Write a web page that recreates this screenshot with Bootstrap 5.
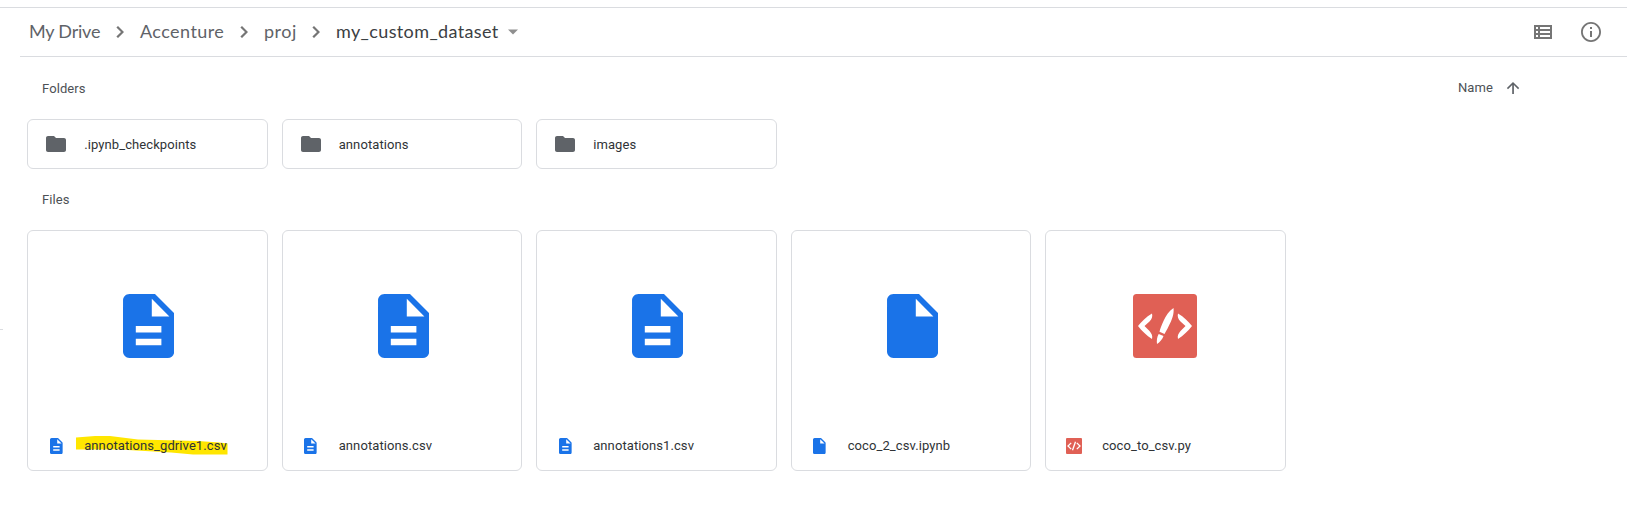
<!DOCTYPE html>
<html lang="en">
<head>
<meta charset="utf-8">
<meta name="viewport" content="width=device-width, initial-scale=1">
<title>my_custom_dataset</title>
<link href="https://cdn.jsdelivr.net/npm/bootstrap@5.3.0/dist/css/bootstrap.min.css" rel="stylesheet">
<style>
body{font-family:Roboto,sans-serif;font-size:13px;font-weight:400;color:#3c4043;background:#fff;line-height:20px;letter-spacing:.09px;overflow:hidden}
svg{display:block;flex:none;fill:currentColor}
.shell{height:522px;padding-top:7px}
.topline{border-top:1px solid #dadce0}
.pathbar{height:49px;margin-left:20px;padding-left:9px;border-bottom:1px solid #dadce0;font:400 18px/24px Lato,sans-serif;color:#5f6368}
.crumb{white-space:nowrap;padding-bottom:2px}
.crumb-drive{width:79px;letter-spacing:-.2px}
.crumb-acc{width:92px;letter-spacing:.43px}
.crumb-proj{width:40px;letter-spacing:.5px}
.crumb-here{width:163px;letter-spacing:.38px;color:#3c4043}
.sep{width:24px;margin-right:8px;color:#757575}
.tools{margin-left:auto;color:#757575;gap:24px;padding-right:24px}
.caret{color:#8f8f8f}
.subbar{height:62px}
.filesbar{height:61px}
.heading{color:#4d5156;padding-left:42px}
.subbar .heading{padding-top:2px}
.sorter{gap:8px;margin-right:102px;color:#4d5156}
.sorter svg{color:#5f6368;margin-bottom:1px}
.tiles{display:grid;grid-template-columns:repeat(5,240.5px);gap:14px;margin-left:27.2px}
.tile{--bs-card-border-color:#dadce0;--bs-card-border-radius:6px;color:#2f3336}
.folder{height:50px;padding-left:18px}
.folder svg{color:#5f6368;margin-right:18px}
.folder span{padding-top:1px}
.filecard{height:241px}
.preview{height:190px}
.preview.doc{padding-left:2.500px}
.label-row{height:49px}
.mini{width:56px}
.doc{color:#1a73e8}
.code{color:#e06055}
.fname{position:relative;white-space:nowrap}
.fname span{position:relative}
.marker{position:absolute;left:-9px;top:-1px;color:#ffe600}
.stub{position:absolute;left:0;top:329px;width:3px;height:1px;background:#dadce0}
</style>
</head>
<body>
<svg width="0" height="0" class="position-absolute" aria-hidden="true">
<symbol id="chev" viewBox="0 0 24 24"><path d="M10 6 8.4 7.6l4.6 4.4-4.6 4.4L10 18l6-6z"/></symbol>
<symbol id="folder" viewBox="2 4 20 16"><path d="M10 4H4c-1.1 0-1.99.9-1.99 2L2 18c0 1.1.9 2 2 2h16c1.1 0 2-.9 2-2V8c0-1.1-.9-2-2-2h-8l-2-2z"/></symbol>
<symbol id="text" viewBox="4 2 16 20"><path d="M14 2H6c-1.1 0-1.99.9-1.99 2L4 20c0 1.1.89 2 1.99 2H18c1.1 0 2-.9 2-2V8l-6-6zm2 16H8v-2h8v2zm0-4H8v-2h8v2zm-3-5V3.5L18.500 9H13z"/></symbol>
<symbol id="plain" viewBox="4 2 16 20"><path d="M14 2H6c-1.1 0-1.99.9-1.99 2L4 20c0 1.1.89 2 1.99 2H18c1.1 0 2-.9 2-2V8l-6-6zm-1 7V3.5L18.500 9H13z"/></symbol>
<symbol id="brush" viewBox="0 0 64 64"><rect width="64" height="64" rx="3.500"/><g fill="#fff"><path d="M19 19.500C13 23 8.500 27.500 5 32c4 5 8.500 9.500 14 13 .8-3-.3-5.500-2.500-8L11.500 32l5-4.500c2.300-2.300 3.300-5 2.500-8z"/><path d="M45 19.500C51 23 55.500 27.500 59 32c-4 5-8.500 9.500-14 13-.8-3 .3-5.500 2.500-8l5-5-5-4.500c-2.300-2.300-3.300-5-2.500-8z"/><path d="M40.500 14c.8 6-1.500 12-5 18.500-1.500 3-2.700 5.300-4 7.500l-5-2.200c.8-3.300 2.100-6.800 4-10.800 2.600-5.500 5.500-10 10-13zM25.700 40l4.800 2c-1.200 3.500-3.600 6-6.500 8-.5-3.500 0-7 1.700-10z"/></g></symbol>
<symbol id="tag" viewBox="0 0 16 16"><rect width="16" height="16" rx="1"/><path d="M5.200 4.900 2 8l3.200 3.100M10.800 4.900 14 8l-3.200 3.100M9.500 3.800 6.500 12.200" fill="none" stroke="#fff" stroke-width="1.300"/></symbol>
</svg>
<main class="shell position-relative">
<div class="topline"></div>
<header class="pathbar d-flex align-items-center">
<nav class="d-flex align-items-center" aria-label="Path">
<span class="crumb crumb-drive">My Drive</span><svg class="sep" height="24"><use href="#chev"/></svg>
<span class="crumb crumb-acc">Accenture</span><svg class="sep" height="24"><use href="#chev"/></svg>
<span class="crumb crumb-proj">proj</span><svg class="sep" height="24"><use href="#chev"/></svg>
<span class="crumb crumb-here">my_custom_dataset</span>
<svg class="caret ms-2" width="12" height="6" viewBox="0 0 12 6"><path d="M1 .5h10L6 5.500z"/></svg>
</nav>
<div class="tools d-flex">
<svg width="24" height="24" viewBox="0 0 24 24"><path d="M3 5v14h18V5H3zm4 2v2H5V7h2zm-2 6v-2h2v2H5zm0 2h2v2H5v-2zm14 2H9v-2h10v2zm0-4H9v-2h10v2zm0-4H9V7h10v2z"/></svg>
<svg width="24" height="24" viewBox="0 0 24 24"><path d="M11 17h2v-6h-2v6zm1-15C6.480 2 2 6.480 2 12s4.480 10 10 10 10-4.480 10-10S17.520 2 12 2zm0 18.200a8.200 8.200 0 1 1 0-16.400 8.200 8.200 0 0 1 0 16.400zM11 9h2V7h-2v2z"/></svg>
</div>
</header>
<div class="subbar d-flex justify-content-between align-items-center">
<div class="heading">Folders</div>
<div class="sorter d-flex align-items-center"><span>Name</span><svg width="24" height="18" viewBox="0 0 24 18"><path d="M5.900 9.100 7 10.200l4.200-4.200v9h1.700V6l4.200 4.200 1.100-1.100L12 3z"/></svg></div>
</div>
<section class="tiles">
<div class="card tile folder flex-row align-items-center"><svg width="20" height="16"><use href="#folder"/></svg><span>.ipynb_checkpoints</span></div>
<div class="card tile folder flex-row align-items-center"><svg width="20" height="16"><use href="#folder"/></svg><span>annotations</span></div>
<div class="card tile folder flex-row align-items-center"><svg width="20" height="16"><use href="#folder"/></svg><span>images</span></div>
</section>
<div class="heading filesbar d-flex align-items-center">Files</div>
<section class="tiles">
<div class="card tile filecard">
<div class="preview doc d-flex align-items-center justify-content-center"><svg width="51.200" height="64"><use href="#text"/></svg></div>
<div class="label-row d-flex align-items-center"><div class="mini doc d-flex justify-content-center"><svg width="12.800" height="16"><use href="#text"/></svg></div><div class="fname"><svg class="marker" width="153" height="20" viewBox="0 0 153 20"><path d="M1 2.500 20 1l15 0 28 3.500 60 1.500 21 1.500 8.500 1v11H118L96 17.500 70 16 44 14.500H1z"/></svg><span>annotations_gdrive1.csv</span></div></div>
</div>
<div class="card tile filecard">
<div class="preview doc d-flex align-items-center justify-content-center"><svg width="51.200" height="64"><use href="#text"/></svg></div>
<div class="label-row d-flex align-items-center"><div class="mini doc d-flex justify-content-center"><svg width="12.800" height="16"><use href="#text"/></svg></div><div class="fname">annotations.csv</div></div>
</div>
<div class="card tile filecard">
<div class="preview doc d-flex align-items-center justify-content-center"><svg width="51.200" height="64"><use href="#text"/></svg></div>
<div class="label-row d-flex align-items-center"><div class="mini doc d-flex justify-content-center"><svg width="12.800" height="16"><use href="#text"/></svg></div><div class="fname">annotations1.csv</div></div>
</div>
<div class="card tile filecard">
<div class="preview doc d-flex align-items-center justify-content-center"><svg width="51.200" height="64"><use href="#plain"/></svg></div>
<div class="label-row d-flex align-items-center"><div class="mini doc d-flex justify-content-center"><svg width="12.800" height="16"><use href="#plain"/></svg></div><div class="fname">coco_2_csv.ipynb</div></div>
</div>
<div class="card tile filecard">
<div class="preview code d-flex align-items-center justify-content-center"><svg width="64" height="64"><use href="#brush"/></svg></div>
<div class="label-row d-flex align-items-center"><div class="mini code d-flex justify-content-center"><svg width="16" height="16"><use href="#tag"/></svg></div><div class="fname">coco_to_csv.py</div></div>
</div>
</section>
<div class="stub"></div>
</main>
<script src="https://cdn.jsdelivr.net/npm/bootstrap@5.3.0/dist/js/bootstrap.bundle.min.js"></script>
</body>
</html>
